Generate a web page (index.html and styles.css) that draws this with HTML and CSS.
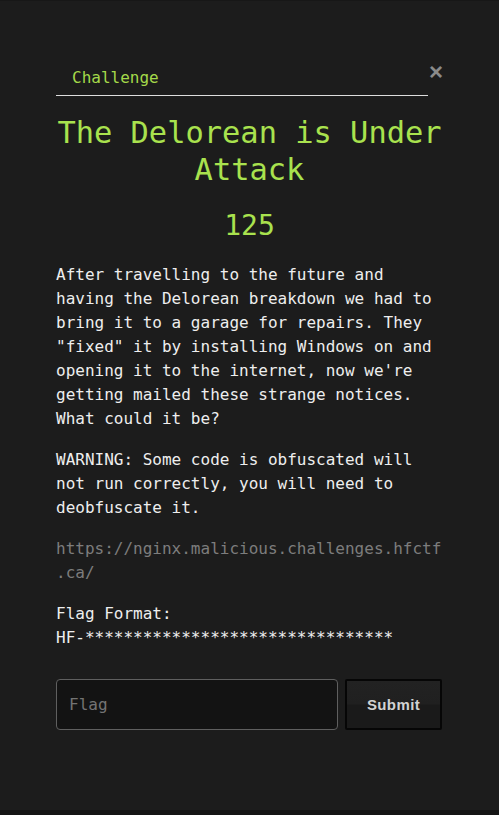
FILE: index.html
```html
<!DOCTYPE html>
<html lang="en">
<head>
<meta charset="utf-8">
<title>Challenge</title>
<link rel="stylesheet" href="styles.css">
</head>
<body>
<div class="page">
  <div class="modal">
    <div class="modal-head">
      <ul class="tabs">
        <li class="tab">Challenge</li>
      </ul>
      <button class="close" type="button" aria-label="Close">&times;</button>
    </div>
    <h2 class="title">The Delorean is Under Attack</h2>
    <h3 class="points">125</h3>
    <div class="desc">
      <p>After travelling to the future and having the Delorean breakdown we had to bring it to a garage for repairs. They "fixed" it by installing Windows on and opening it to the internet, now we're getting mailed these strange notices. What could it be?</p>
      <p>WARNING: Some code is obfuscated will not run correctly, you will need to deobfuscate it.</p>
      <p><a class="link" href="#">https://nginx.malicious.challenges.hfctf.ca/</a></p>
      <p>Flag Format:<br>HF-********************************</p>
    </div>
    <form class="submit-row">
      <input class="flag-input" type="text" placeholder="Flag">
      <button class="submit-btn" type="button">Submit</button>
    </form>
  </div>
</div>
</body>
</html>
```

FILE: styles.css
```css
html {
  background: #141414;
}
body {
  margin: 0;
  font-family: "DejaVu Sans Mono", monospace;
  color: #eeeeee;
}
.page {
  min-height: 810px;
  background-color: #1c1c1c;
  border-top: 1px solid #171717;
  box-sizing: border-box;
}
.modal {
  width: 387px;
  margin: 0 auto;
  padding-top: 60px;
}
.modal-head {
  display: flex;
  align-items: flex-start;
}
.tabs {
  list-style: none;
  margin: 0;
  padding: 0;
  flex: 0 0 372px;
  border-bottom: 1px solid #dddddd;
}
.tab {
  padding: 6px 16px 7px;
  font-size: 16px;
  line-height: 21px;
  color: #a4d94a;
}
.close {
  background: none;
  border: none;
  padding: 0;
  margin: 0;
  width: 15px;
  font-family: "Liberation Sans", sans-serif;
  font-size: 24px;
  font-weight: bold;
  line-height: 22px;
  color: #8a8a8a;
  text-align: right;
}
.title {
  margin: 18px -6px 0;
  font-size: 30.4px;
  font-weight: normal;
  line-height: 37px;
  text-align: center;
  color: #a9e24e;
}
.points {
  margin: 21px 0 0;
  font-size: 28px;
  font-weight: normal;
  line-height: 34px;
  text-align: center;
  color: #a9e24e;
}
.desc {
  margin: 20px -2px 0 0;
  font-size: 16px;
  line-height: 24px;
}
.desc p {
  margin: 0 0 17px;
}
.link {
  color: #7d7d7d;
  text-decoration: none;
  overflow-wrap: anywhere;
}
.submit-row {
  display: flex;
  gap: 7px;
  margin-top: 29px;
}
.flag-input {
  flex: 0 0 282px;
  box-sizing: border-box;
  height: 51px;
  padding: 0 12px;
  border: 1px solid #5f5f5f;
  border-radius: 4px;
  background: #131313;
  color: #eeeeee;
  font-family: "DejaVu Sans Mono", monospace;
  font-size: 16px;
  outline: none;
}
.flag-input::placeholder {
  color: #737373;
}
.submit-btn {
  flex: 0 0 97px;
  box-sizing: border-box;
  height: 51px;
  border: 2px solid #060606;
  border-radius: 2px;
  background: linear-gradient(#222222 0%, #202020 48%, #1a1a1a 52%, #1a1a1a 100%);
  color: #d2d2d2;
  font-family: "Liberation Sans", sans-serif;
  font-size: 15px;
  font-weight: bold;
  letter-spacing: 0.4px;
}
```
